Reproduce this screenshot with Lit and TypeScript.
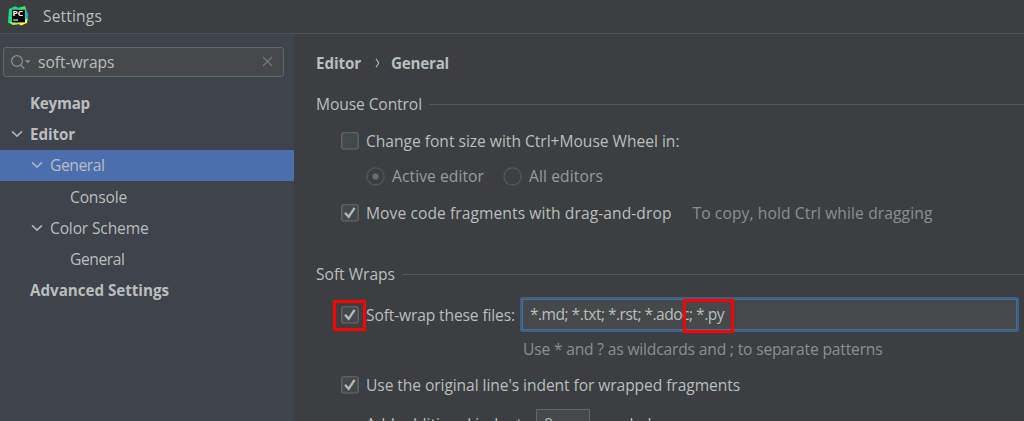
import { LitElement, html, css, svg, nothing } from "lit";
import { customElement, property } from "lit/decorators.js";

/** A single-line label whose tracking is adjusted so that it fills `w` pixels. */
@customElement("fit-label")
class FitLabel extends LitElement {
  @property() text = "";
  @property({ type: Number }) w = 0;
  static styles = css`
    :host { display: inline-block; white-space: pre; flex: none; }
    .t { display: inline-block; }
  `;
  render() {
    return html`<span class="t">${this.text}</span>`;
  }
  updated() {
    const el = this.renderRoot.querySelector(".t") as HTMLElement;
    el.style.letterSpacing = "0px";
    const natural = el.getBoundingClientRect().width;
    if (this.w && natural) {
      el.style.letterSpacing = `${(this.w - natural) / this.text.length}px`;
    }
  }
}

@customElement("check-box")
class CheckBox extends LitElement {
  @property({ type: Boolean }) checked = false;
  static styles = css`
    :host { display: block; flex: none; width: 18px; height: 18px; }
    svg { display: block; }
  `;
  render() {
    return html`<svg width="18" height="18" viewBox="0 0 18 18">
      <rect x=".8" y=".8" width="16.4" height="16.2" rx="1.6" fill="#43494a" stroke="#696b6c" stroke-width="1.1"/>
      ${this.checked
        ? svg`<path d="M4 8.8L7.6 12.8L13.6 3.8" fill="none" stroke="#b4b6b7" stroke-width="2.4"/>`
        : nothing}
    </svg>`;
  }
}

interface Node { text: string; w: number; level: number; open?: boolean; bold?: boolean; selected?: boolean; }

const TREE: Node[] = [
  { text: "Keymap", w: 60, level: 0, bold: true },
  { text: "Editor", w: 45, level: 0, bold: true, open: true },
  { text: "General", w: 54.5, level: 1, open: true, selected: true },
  { text: "Console", w: 57, level: 2 },
  { text: "Color Scheme", w: 98.5, level: 1, open: true },
  { text: "General", w: 54.5, level: 2 },
  { text: "Advanced Settings", w: 139, level: 0, bold: true },
];

@customElement("app-root")
class AppRoot extends LitElement {
  static styles = css`
    :host {
      display: flex; flex-direction: column; width: 1024px; height: 421px; overflow: hidden;
      background: #3c3f41; color: #bbbdbe;
      font: 15.6px/22px "Open Sans", "Noto Sans", sans-serif;
    }
    svg { display: block; flex: none; }
    .bold { font-weight: 700; font-size: 15.2px; }
    .title { display: flex; align-items: center; gap: 15px; flex: none; box-sizing: border-box;
      height: 34px; padding: 0 0 1px 8px; border-bottom: 1px solid #505152; }
    .body { display: flex; flex: 1; min-height: 0; }
    .side { flex: none; width: 294px; background: #3f434c; padding-top: 13px; }
    .search { display: flex; align-items: center; box-sizing: border-box; height: 30px; width: 281px;
      margin-left: 3px; padding: 0 10px 1px 7px; border: 1px solid #646767; border-radius: 3px; background: #45494a; }
    .search fit-label { margin-left: 7px; }
    .search .clear { margin-left: auto; }
    .tree { padding-top: 10px; }
    .node { display: flex; align-items: center; height: 31.3px; box-sizing: border-box; }
    .node.selected { background: #4b6eaf; }
    .l0 { padding-left: 11px; }
    .l1 { padding-left: 31px; }
    .l2 { padding-left: 51px; }
    .twist { width: 12px; margin-right: 7px; flex: none; }
    .main { flex: 1; min-width: 0; padding-left: 22px; display: grid;
      grid-template-rows: 57px 26px 48px 22px 52px 25px 20px 13px 36px 32px 40px 50px; }
    .row { display: flex; align-items: center; min-width: 0; }
    .crumbs fit-label:last-child { margin-left: 11px; }
    .crumbs svg { margin-left: 14px; }
    .rule { flex: 1; height: 1px; background: #555859; margin-left: 7px; }
    .opt { padding-left: 25px; gap: 7px; }
    .radios { padding-left: 50px; color: #999b9c; }
    .radios fit-label { margin: 0 19px 0 7px; }
    .muted { color: #8c8e8f; }
    .opt .muted { margin-left: 14px; }
    .field { position: relative; box-sizing: border-box; width: 499px; height: 35px; margin: -1px 0 0 -2px;
      border: 2px solid #3d6185; border-radius: 2px; background: #45494a; }
    .inner { display: flex; align-items: center; box-sizing: border-box; height: 31px;
      border: 1px solid #466d94; padding: 0 0 1px 7px; }
    .tick { position: relative; }
    .mark { position: absolute; box-sizing: border-box; border: 3px solid #fe0000; }
    .mark.a { left: -8px; top: -6px; width: 33px; height: 31px; }
    .mark.b { left: 161px; top: 0; width: 51px; height: 34px; }
    .hint { padding-left: 207px; }
    .add { padding-left: 50px; align-items: flex-start; }
    .num { box-sizing: border-box; width: 54px; height: 32px; padding: 3px 7px; border: 1px solid #646767; background: #45494a; margin: 4px 11px 0 10px; }
    .add > fit-label { margin-top: 8px; }
  `;

  node(n: Node) {
    return html`<div class="node l${n.level} ${n.selected ? "selected" : ""} ${n.bold ? "bold" : ""}">
      <span class="twist">${n.open
        ? html`<svg width="12" height="10" viewBox="0 0 12 10"><path d="M1 2.4L6 7.2L11 2.4" fill="none" stroke="#afb1b3" stroke-width="1.6"/></svg>`
        : nothing}</span>
      <fit-label text=${n.text} w=${n.w}></fit-label>
    </div>`;
  }

  radio(on: boolean) {
    return html`<svg width="19" height="19" viewBox="0 0 19 19">
      <circle cx="9.5" cy="9.5" r="8.6" fill="none" stroke="#56595b" stroke-width="1.2"/>
      ${on ? svg`<circle cx="9.5" cy="9.5" r="3.1" fill="#6b6e70"/>` : nothing}
    </svg>`;
  }

  render() {
    return html`
      <div class="title">
        <svg width="20" height="20" viewBox="0 0 20 20">
          <path d="M1 3L7 .3L11 2L17 .3L19 6L13 13L5 19L0 16.5Z" fill="#21d789"/>
          <path d="M10 2L17 0L18 5Z" fill="#3bea62"/>
          <path d="M17 5L20 7L19.5 15L16 15Z" fill="#18b9d8"/>
          <path d="M19.5 12L19 17L13 19.5L9 16.5L16 15Z" fill="#fcf84a"/>
          <path d="M1 16L8 16L13 18L5 19Z" fill="#a3ee55"/>
          <rect x="4" y="3.8" width="13" height="12.6" fill="#050505"/>
          <text x="4.6" y="10.4" fill="#fff" font-family="Open Sans, sans-serif" font-weight="700" font-size="7.8" textLength="10.6" lengthAdjust="spacingAndGlyphs">PC</text>
          <rect x="5.2" y="13.5" width="4.8" height="1.1" fill="#fff"/>
        </svg>
        <fit-label text="Settings" w="59"></fit-label>
      </div>
      <div class="body">
        <div class="side">
          <div class="search">
            <svg width="20" height="16" viewBox="0 0 20 16">
              <circle cx="6" cy="7" r="5.4" fill="none" stroke="#868c91" stroke-width="1.3"/>
              <path d="M9.8 11L13.4 14.7" stroke="#868c91" stroke-width="1.4"/>
              <path d="M13.8 6.2H19.6L16.7 9.4Z" fill="#868c91"/>
            </svg>
            <fit-label text="soft-wraps" w="76.5"></fit-label>
            <svg class="clear" width="11" height="11" viewBox="0 0 11 11"><path d="M1 1L10 10M10 1L1 10" stroke="#777b7e" stroke-width="1.1"/></svg>
          </div>
          <div class="tree">${TREE.map((n) => this.node(n))}</div>
        </div>
        <div class="main">
          <div class="row crumbs bold">
            <fit-label text="Editor" w="45"></fit-label>
            <svg width="5" height="10" viewBox="0 0 5 10"><path d="M1 .8L3.7 5L1 9.2" fill="none" stroke="#bbb" stroke-width="1.1"/></svg>
            <fit-label text="General" w="58"></fit-label>
          </div>
          <div class="row"><fit-label text="Mouse Control" w="106"></fit-label><span class="rule"></span></div>
          <div class="row opt"><check-box></check-box><fit-label text="Change font size with Ctrl+Mouse Wheel in:" w="313.5"></fit-label></div>
          <div class="row radios">
            ${this.radio(true)}<fit-label text="Active editor" w="92"></fit-label>
            ${this.radio(false)}<fit-label text="All editors" w="74"></fit-label>
          </div>
          <div class="row opt"><check-box checked></check-box>
            <fit-label text="Move code fragments with drag-and-drop" w="305.5"></fit-label>
            <fit-label class="muted" text="To copy, hold Ctrl while dragging" w="240"></fit-label>
          </div>
          <span></span>
          <div class="row"><fit-label text="Soft Wraps" w="79"></fit-label><span class="rule"></span></div>
          <span></span>
          <div class="row opt">
            <div class="tick"><check-box checked></check-box><span class="mark a"></span></div>
            <fit-label text="Soft-wrap these files:" w="149"></fit-label>
            <div class="field">
              <div class="inner"><fit-label text="*.md; *.txt; *.rst; *.adoc; *.py" w="194"></fit-label></div>
              <span class="mark b"></span>
            </div>
          </div>
          <div class="row hint muted"><fit-label text="Use * and ? as wildcards and ; to separate patterns" w="359.5"></fit-label></div>
          <div class="row opt"><check-box checked></check-box><fit-label text="Use the original line's indent for wrapped fragments" w="374"></fit-label></div>
          <div class="row add">
            <fit-label text="Add additional indent:" w="160"></fit-label>
            <div class="num">8</div>
            <fit-label text="symbols" w="57"></fit-label>
          </div>
        </div>
      </div>
    `;
  }
}
